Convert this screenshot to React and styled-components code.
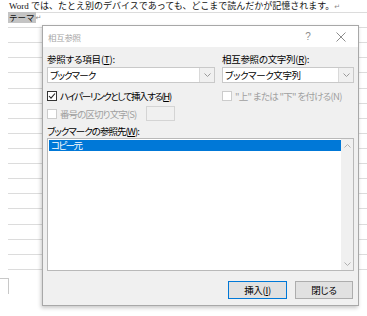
import styled, { createGlobalStyle } from 'styled-components'

const GlobalStyle = createGlobalStyle`
  body {
    margin: 0;
    background: #ffffff;
  }
`

const uiFont = `"Noto Sans CJK JP", "Liberation Sans", sans-serif`

const Page = styled.div`
  position: relative;
  width: 367px;
  height: 316px;
  overflow: hidden;
  background: #ffffff;
`

const Doc = styled.div`
  padding-left: 8px;
  font-family: "Liberation Serif", "Noto Sans CJK JP", serif;
  font-size: 9px;
  color: #111;
`

const FirstLine = styled.div`
  box-sizing: border-box;
  height: 13px;
  padding-left: 1px;
  line-height: 12px;
  white-space: nowrap;
  border-bottom: 1px solid #dcdcdc;
`

const GridRow = styled.div`
  box-sizing: border-box;
  height: 15.12px;
  border-bottom: 1px solid #dcdcdc;
  display: flex;
  align-items: flex-start;
`

const Highlight = styled.span`
  background: #c4c4c4;
  height: 11px;
  line-height: 11px;
  padding: 0 1px;
  margin-top: -1px;
  font-family: "Noto Sans CJK JP", sans-serif;
  font-size: 8.5px;
`

const Para = styled.span`
  color: #8a8a8a;
  font-family: "DejaVu Sans", sans-serif;
  font-size: 7px;
  line-height: 10px;
`

const CropMark = styled.div`
  margin-top: 8px;
  width: 8px;
  height: 15px;
  border-top: 1px solid #c8c8c8;
  border-right: 1px solid #c8c8c8;
`

const Dialog = styled.div`
  position: absolute;
  left: 42px;
  top: 25px;
  width: 317px;
  height: 281px;
  box-sizing: border-box;
  border: 1px solid #a8a8a8;
  background: #f0f0f0;
  box-shadow: -1px 2px 4px rgba(0, 0, 0, 0.22);
  display: flex;
  flex-direction: column;
  font-family: ${uiFont};
  font-feature-settings: "palt";
  font-size: 9.5px;
  color: #000;
`

const TitleBar = styled.div`
  height: 21px;
  background: #ffffff;
  display: flex;
  align-items: center;
  padding: 0 10px 0 5px;
  color: #a6a6a6;
`

const TitleText = styled.span`
  flex: 1;
  font-size: 8.5px;
  letter-spacing: -0.3px;
`

const TitleControls = styled.div`
  display: grid;
  grid-template-columns: 14px 14px;
  column-gap: 19px;
  align-items: center;
`

const TitleButton = styled.span`
  display: flex;
  justify-content: center;
  color: #8c8c8c;
  font-family: "Liberation Sans", sans-serif;
  font-size: 10px;
`

const Body = styled.div`
  flex: 1;
  padding: 6px 4px 0 4px;
  display: flex;
  flex-direction: column;
`

const Columns = styled.div`
  display: grid;
  grid-template-columns: 168px 132px;
  column-gap: 7px;
`

const Column = styled.div`
  display: flex;
  flex-direction: column;
`

const Label = styled.div`
  height: 12px;
  line-height: 12px;
  white-space: nowrap;
  letter-spacing: ${p => p.$ls || 0}px;
  margin-top: ${p => p.$top || 0}px;
  margin-bottom: ${p => p.$after || 0}px;
  color: ${p => (p.$disabled ? '#a0a0a0' : '#000')};
`

const Key = styled.span`
  text-decoration: underline;
  text-underline-offset: 1px;
`

const Combo = styled.div`
  box-sizing: border-box;
  height: 16px;
  border: 1px solid #c9c9c9;
  background: #ffffff;
  display: flex;
  align-items: stretch;
`

const ComboText = styled.span`
  flex: 1;
  padding-left: 2px;
  line-height: 14px;
  letter-spacing: ${p => p.$ls || 0}px;
`

const ComboArrow = styled.span`
  width: 14px;
  border-left: 1px solid #d9d9d9;
  background: #f0f0f0;
  display: flex;
  align-items: center;
  justify-content: center;
`

const CheckRow = styled.label`
  height: ${p => p.$h || 14}px;
  margin-top: ${p => p.$top || 0}px;
  display: flex;
  align-items: center;
  white-space: nowrap;
  letter-spacing: ${p => p.$ls || 0}px;
  color: ${p => (p.$disabled ? '#a0a0a0' : '#000')};
`

const Box = styled.span`
  box-sizing: border-box;
  flex: none;
  width: 10px;
  height: 10px;
  margin-right: 3px;
  border: 1px solid ${p => (p.$disabled ? '#cccccc' : '#333333')};
  background: #ffffff;
  display: flex;
  align-items: center;
  justify-content: center;
`

const SmallInput = styled.span`
  box-sizing: border-box;
  width: 29px;
  height: 15px;
  margin-left: 10px;
  border: 1px solid #d4d4d4;
  background: #f0f0f0;
`

const ListBox = styled.div`
  box-sizing: border-box;
  height: 133px;
  margin-top: 1px;
  border: 1px solid #b9b9b9;
  background: #ffffff;
  display: flex;
`

const Items = styled.div`
  flex: 1;
  padding: 1px 0 0 1px;
`

const Item = styled.div`
  height: 11px;
  line-height: 11px;
  padding-left: 2px;
  letter-spacing: -1.6px;
  background: ${p => (p.$selected ? '#0078d7' : 'transparent')};
  color: ${p => (p.$selected ? '#ffffff' : '#000')};
`

const ScrollBar = styled.div`
  width: 12px;
  background: #f0f0f0;
  display: flex;
  flex-direction: column;
  justify-content: space-between;
  align-items: center;
  padding: 5px 0 4px;
`

const ButtonRow = styled.div`
  display: flex;
  justify-content: flex-end;
  gap: 8px;
  margin-top: 10px;
  padding-right: 1px;
`

const Button = styled.button`
  box-sizing: border-box;
  width: ${p => p.$w}px;
  height: 18px;
  padding: 0;
  font: inherit;
  font-feature-settings: "palt";
  letter-spacing: -0.3px;
  color: #000;
  background: #e1e1e1;
  border: 1px solid ${p => (p.$default ? '#0078d7' : '#adadad')};
  box-shadow: ${p => (p.$default ? 'inset 0 0 0 1px #e1e1e1' : 'none')};
`

function Chevron({ up, color = '#9a9a9a' }) {
  return (
    <svg width="7" height="4" viewBox="0 0 7 4">
      <polyline
        points={up ? '0.5,3.5 3.5,0.5 6.5,3.5' : '0.5,0.5 3.5,3.5 6.5,0.5'}
        fill="none"
        stroke={color}
        strokeWidth="1"
      />
    </svg>
  )
}

function Close() {
  return (
    <svg width="10" height="10" viewBox="0 0 10 10">
      <path d="M0.5 0.5 L9.5 9.5 M9.5 0.5 L0.5 9.5" stroke="#8c8c8c" strokeWidth="1" />
    </svg>
  )
}

function Check() {
  return (
    <svg width="8" height="8" viewBox="0 0 8 8">
      <polyline points="1,4 3,6.2 7,1.5" fill="none" stroke="#222" strokeWidth="1.1" />
    </svg>
  )
}

export default function App() {
  const rows = Array.from({ length: 17 }, (_, i) => i)

  return (
    <Page>
      <GlobalStyle />
      <Doc>
        <FirstLine>
          Word では、たとえ別のデバイスであっても、どこまで読んだかが記憶されます。<Para>↵</Para>
        </FirstLine>
        {rows.map(i => (
          <GridRow key={i}>
            {i === 0 && (
              <>
                <Highlight>テーマ</Highlight>
                <Para>↵</Para>
              </>
            )}
          </GridRow>
        ))}
      </Doc>
      <CropMark />

      <Dialog>
        <TitleBar>
          <TitleText>相互参照</TitleText>
          <TitleControls>
            <TitleButton>?</TitleButton>
            <TitleButton><Close /></TitleButton>
          </TitleControls>
        </TitleBar>
        <Body>
          <Columns>
            <Column>
              <Label $after={2} $ls={-0.2}>参照する項目(<Key>T</Key>):</Label>
              <Combo>
                <ComboText $ls={-0.9}>ブックマーク</ComboText>
                <ComboArrow><Chevron /></ComboArrow>
              </Combo>
              <CheckRow $top={6} $ls={-1.4}>
                <Box><Check /></Box>
                ハイパーリンクとして挿入する(<Key>H</Key>)
              </CheckRow>
            </Column>
            <Column>
              <Label $after={2} $ls={-0.3}>相互参照の文字列(<Key>R</Key>):</Label>
              <Combo>
                <ComboText $ls={-0.4}>ブックマーク文字列</ComboText>
                <ComboArrow><Chevron /></ComboArrow>
              </Combo>
              <CheckRow $top={6} $ls={-0.7} $disabled>
                <Box $disabled />
                "上" または "下" を付ける(N)
              </CheckRow>
            </Column>
          </Columns>
          <CheckRow $top={3} $h={15} $ls={-0.9} $disabled>
            <Box $disabled />
            番号の区切り文字(S)
            <SmallInput />
          </CheckRow>
          <Label $top={4} $ls={-1}>ブックマークの参照先(<Key>W</Key>):</Label>
          <ListBox>
            <Items>
              <Item $selected>コピー元</Item>
            </Items>
            <ScrollBar>
              <Chevron up color="#b0b0b0" />
              <Chevron color="#b0b0b0" />
            </ScrollBar>
          </ListBox>
          <ButtonRow>
            <Button $w={59} $default>挿入(<Key>I</Key>)</Button>
            <Button $w={58}>閉じる</Button>
          </ButtonRow>
        </Body>
      </Dialog>
    </Page>
  )
}
